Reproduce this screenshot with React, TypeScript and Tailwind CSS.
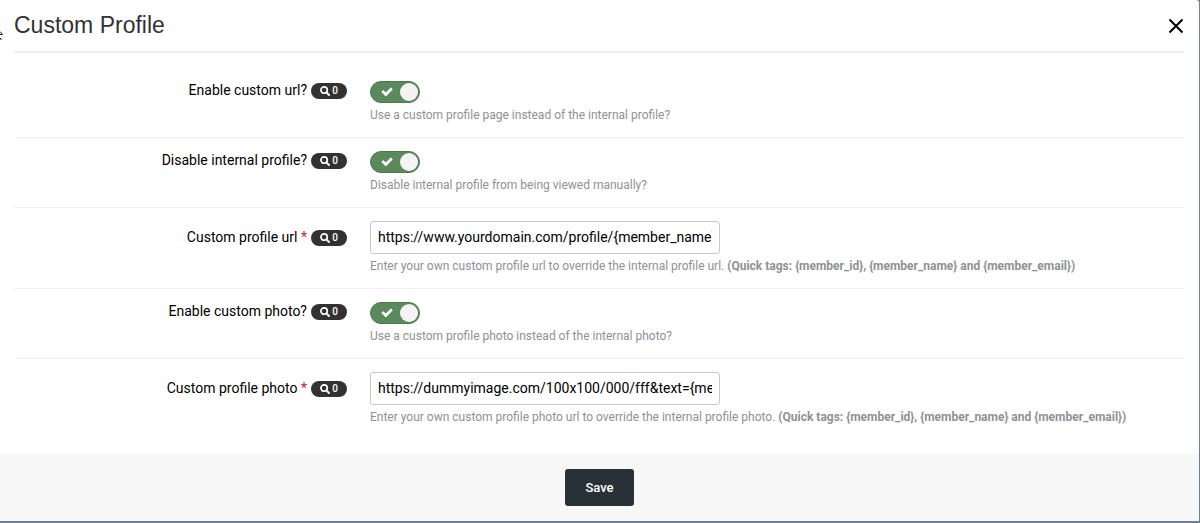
import { useState } from "react";

type Field = {
  id: string;
  label: string;
  help: string;
  tags?: string;
  value?: string;
};

const QUICK_TAGS = "(Quick tags: {member_id}, {member_name} and {member_email})";

const FIELDS: Field[] = [
  {
    id: "enable_url",
    label: "Enable custom url?",
    help: "Use a custom profile page instead of the internal profile?"
  },
  {
    id: "disable_internal",
    label: "Disable internal profile?",
    help: "Disable internal profile from being viewed manually?"
  },
  {
    id: "profile_url",
    label: "Custom profile url",
    help: "Enter your own custom profile url to override the internal profile url.",
    tags: QUICK_TAGS,
    value: "https://www.yourdomain.com/profile/{member_name}"
  },
  {
    id: "enable_photo",
    label: "Enable custom photo?",
    help: "Use a custom profile photo instead of the internal photo?"
  },
  {
    id: "profile_photo",
    label: "Custom profile photo",
    help: "Enter your own custom profile photo url to override the internal profile photo.",
    tags: QUICK_TAGS,
    value: "https://dummyimage.com/100x100/000/fff&text={member_name}"
  }
];

function SearchIcon() {
  return (
    <svg viewBox="0 0 10 10" className="size-[10px]" fill="none" stroke="currentColor">
      <circle cx="4.1" cy="4.1" r="3.2" strokeWidth="1.6" />
      <path d="M6.4 6.4 9 9" strokeWidth="1.9" strokeLinecap="round" />
    </svg>
  );
}

function CheckIcon() {
  return (
    <svg
      viewBox="0 0 12 10"
      className="pointer-events-none absolute top-[6px] left-[11px] h-[10px] w-3 text-white opacity-0 peer-checked:opacity-100"
      fill="currentColor"
    >
      <path d="M11.4 2.7 5.3 8.9Q4.8 9.4 4.3 8.9L.7 5.3Q.3 4.9.7 4.5L1.8 3.4Q2.2 3 2.6 3.4L4.8 5.5 9.5.8Q9.9.4 10.3.8L11.4 1.9Q11.8 2.3 11.4 2.7Z" />
    </svg>
  );
}

function SearchBadge() {
  return (
    <span className="flex h-4 w-9 items-center justify-center gap-[2px] rounded-full bg-[#323232] text-[10px] leading-4 font-medium text-white">
      <SearchIcon />
      0
    </span>
  );
}

function Toggle({ id }: { id: string }) {
  const [on, setOn] = useState(true);

  return (
    <label className="relative block h-[22px] w-[50px]">
      <input
        id={id}
        type="checkbox"
        checked={on}
        onChange={() => setOn(!on)}
        className="peer absolute inset-0 size-full cursor-pointer appearance-none rounded-full border border-[#9a9a9a] bg-[#b5b5b5] checked:border-[#4c784e] checked:bg-[#5a8a5c]"
      />
      <CheckIcon />
      <span className="pointer-events-none absolute top-[2px] left-[2px] size-[18px] rounded-full bg-[#f4f4f4] peer-checked:left-[30px]" />
    </label>
  );
}

function FieldRow({ field }: { field: Field }) {
  const isText = field.value !== undefined;

  return (
    <li className="flex border-b border-[#f0f0f0] py-[13px] last:border-b-0">
      <div
        className={`flex w-[356px] shrink-0 items-center justify-end gap-1 self-start pr-[23px] ${isText ? "pt-[7px]" : ""}`}
      >
        <label htmlFor={field.id} className="text-sm leading-4 text-black">
          {field.label}
          {isText ? <span className="text-[#c7252b]"> *</span> : null}
        </label>
        <div className="pt-[2px]">
          <SearchBadge />
        </div>
      </div>
      <div className="min-w-0 flex-1">
        {isText ? (
          <input
            id={field.id}
            type="text"
            defaultValue={field.value}
            className="block h-[33px] w-full max-w-[350px] rounded-[3px] border border-[#c8c8c8] bg-white px-[7px] pb-[2px] text-sm text-black"
          />
        ) : (
          <Toggle id={field.id} />
        )}
        <p className="mt-[3px] text-xs leading-[18px] text-[#8f9194]">
          {field.help}
          {field.tags ? <strong className="font-bold"> {field.tags}</strong> : null}
        </p>
      </div>
    </li>
  );
}

export default function App() {
  return (
    <div className="relative bg-[#708090] pr-px pb-[2px] font-['Roboto',sans-serif]">
      <div className="overflow-hidden rounded-tr-[3px] bg-white">
        <header className="mr-[15px] ml-[14px] flex h-[53px] items-center justify-between border-b-2 border-[#f0f0f0]">
          <h1 className="pb-[2px] font-['Liberation_Sans',Arial,sans-serif] text-[23px] leading-7 text-[#323232]">
            Custom Profile
          </h1>
          <button type="button" aria-label="Close" className="text-black">
            <svg viewBox="0 0 16 16" className="size-4" stroke="currentColor" strokeWidth="2">
              <path d="M1.5 1.5 14.5 14.5M14.5 1.5 1.5 14.5" />
            </svg>
          </button>
        </header>
        <form onSubmit={(e) => e.preventDefault()}>
          <ul className="mr-[15px] ml-[14px] py-[15px]">
            {FIELDS.map((field) => (
              <FieldRow key={field.id} field={field} />
            ))}
          </ul>
          <footer className="flex justify-center bg-[#f7f7f7] py-[15px]">
            <button
              type="submit"
              className="h-[37px] rounded-[3px] bg-[#283136] px-5 text-[13px] font-medium text-white"
            >
              Save
            </button>
          </footer>
        </form>
      </div>
      <svg
        viewBox="0 0 4 12"
        className="pointer-events-none absolute top-[30px] left-0 h-3 w-1"
        fill="none"
        stroke="#222"
      >
        <path d="M0 1.5 2.5 4.5H0M0 8.5H1V10" />
      </svg>
    </div>
  );
}
